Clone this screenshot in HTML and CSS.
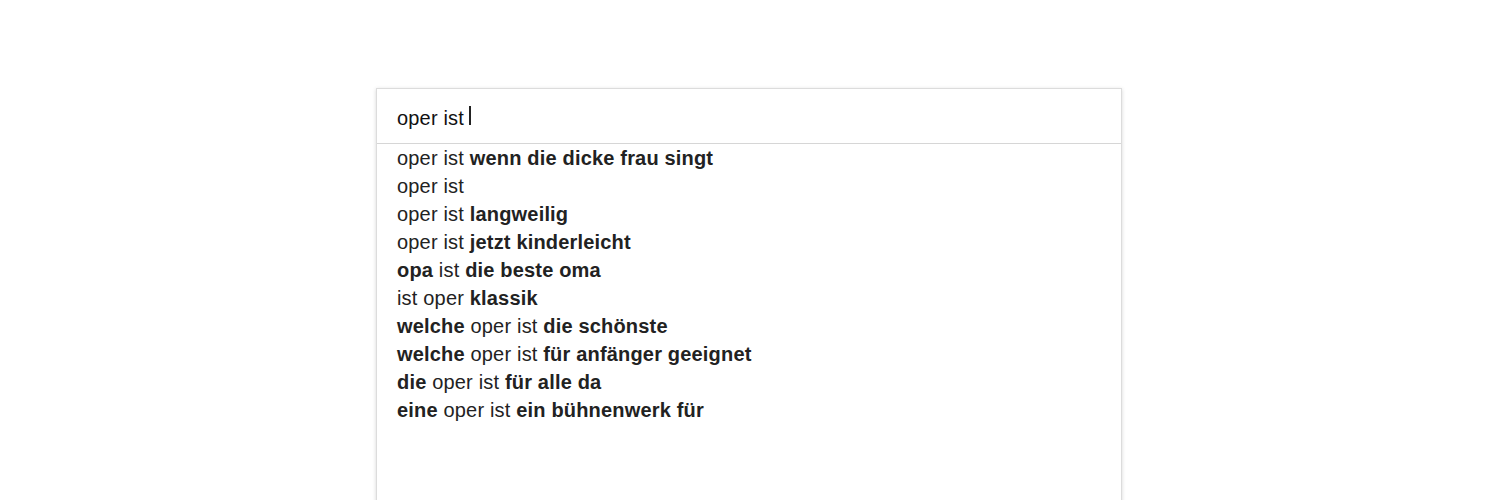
FILE: index.html
```html
<!DOCTYPE html>
<html lang="de">
<head>
<meta charset="utf-8">
<title>oper ist</title>
<link rel="stylesheet" href="styles.css">
</head>
<body>
<div class="page">
  <div class="box">
    <div class="input"><span class="query">oper ist</span><span class="cursor"></span></div>
    <ul class="suggestions">
      <li>oper ist <b>wenn die dicke frau singt</b></li>
      <li>oper ist</li>
      <li>oper ist <b>langweilig</b></li>
      <li>oper ist <b>jetzt kinderleicht</b></li>
      <li><b>opa</b> ist <b>die beste oma</b></li>
      <li>ist oper <b>klassik</b></li>
      <li><b>welche</b> oper ist <b>die schönste</b></li>
      <li><b>welche</b> oper ist <b>für anfänger geeignet</b></li>
      <li><b>die</b> oper ist <b>für alle da</b></li>
      <li><b>eine</b> oper ist <b>ein bühnenwerk für</b></li>
    </ul>
  </div>
</div>
</body>
</html>
```
FILE: styles.css
```css
html, body {
  margin: 0;
  padding: 0;
  background: #fff;
  overflow: hidden;
}
.page {
  width: 1500px;
  height: 500px;
  padding-top: 88px;
  box-sizing: border-box;
  display: flex;
  justify-content: center;
  overflow: hidden;
  font-family: "Liberation Sans", Arial, sans-serif;
  color: #222;
}
.box {
  width: 746px;
  height: 420px;
  flex-shrink: 0;
  box-sizing: border-box;
  border: 1px solid #dcdcdc;
  box-shadow: 0 1px 4px rgba(0,0,0,0.16);
  background: #fff;
  margin-left: -2px;
}
.input {
  height: 55px;
  box-sizing: border-box;
  border-bottom: 1px solid #d6d6d6;
  padding-left: 20px;
  display: flex;
  align-items: center;
  font-size: 20px;
  letter-spacing: 0.18px;
  padding-top: 4px;
}
.query {
  color: #111;
}
.cursor {
  display: inline-block;
  width: 2px;
  height: 19px;
  background: #222;
  margin-left: 5px;
  margin-top: -6px;
}
.suggestions {
  list-style: none;
  margin: 0;
  padding: 0 0 0 20px;
  font-size: 20px;
  line-height: 28px;
  letter-spacing: 0.18px;
}
.suggestions li {
  height: 28px;
  white-space: nowrap;
}
.suggestions b {
  font-weight: bold;
}
```
